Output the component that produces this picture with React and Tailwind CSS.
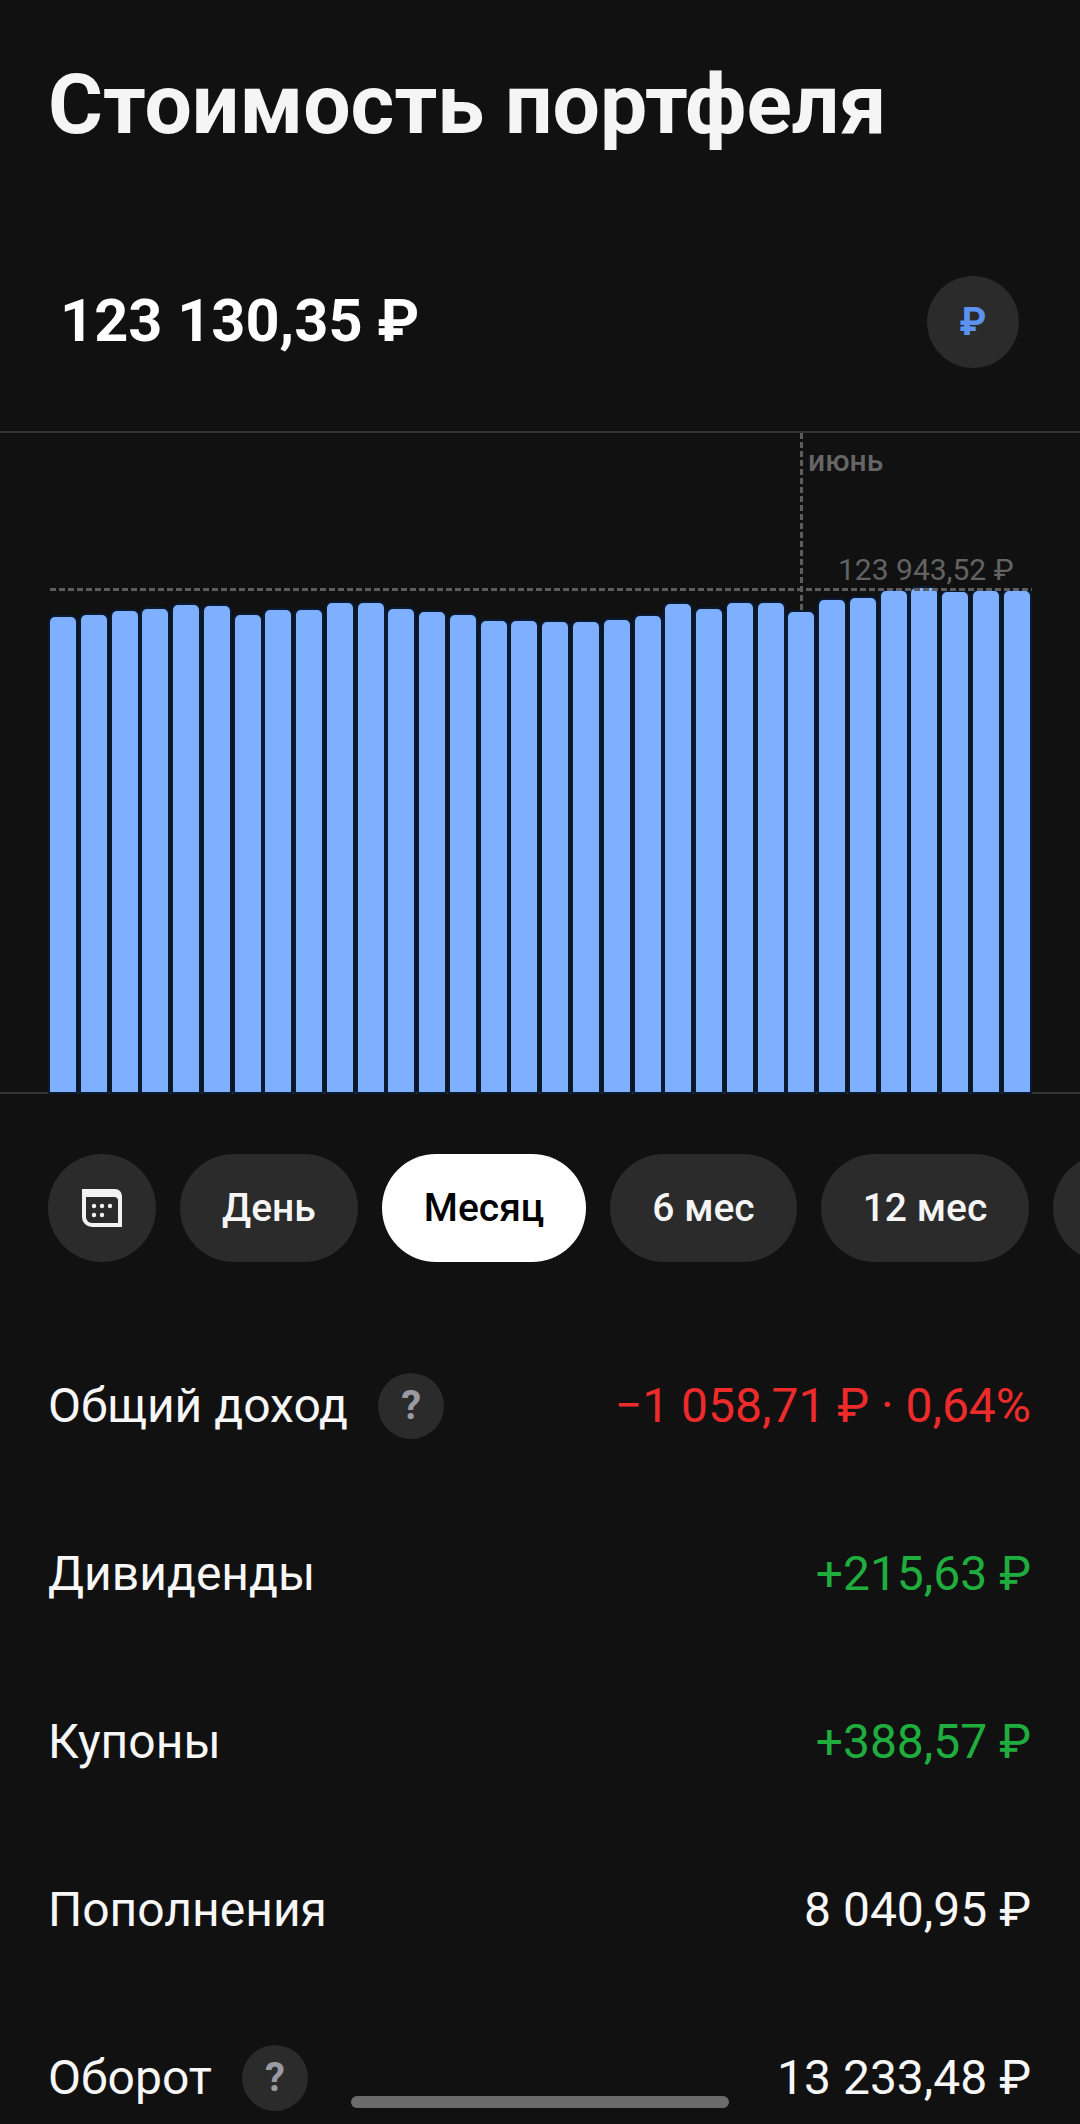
import React from 'react';

const barTops = [
  617, 615, 611, 609, 605, 606, 615, 610, 610, 603, 603, 609, 612, 615, 621, 621,
  622, 622, 620, 616, 604, 609, 603, 603, 612, 600, 598, 591, 588, 592, 591, 591,
];

const CalendarIcon = () => (
  <svg width="40" height="38" viewBox="0 0 40 38" fill="none">
    <path d="M0 0H33a7 7 0 0 1 7 7V38H10A10 10 0 0 1 0 28Z" fill="#f2f2f2" />
    <path d="M4 8H32a4 4 0 0 1 4 4V34H10a6 6 0 0 1-6-6Z" fill="#2b2b2b" />
    <circle cx="12" cy="17" r="2.2" fill="#f2f2f2" />
    <circle cx="20" cy="17" r="2.2" fill="#f2f2f2" />
    <circle cx="28" cy="17" r="2.2" fill="#f2f2f2" />
    <circle cx="12" cy="26" r="2.2" fill="#f2f2f2" />
    <circle cx="20" cy="26" r="2.2" fill="#f2f2f2" />
  </svg>
);

const HelpBadge = () => (
  <span className="flex h-[66px] w-[66px] items-center justify-center rounded-full bg-[#2b2b2b] text-[40px] leading-none font-bold text-[#9a9aa2]">
    ?
  </span>
);

const Pill = ({ children, active }) => (
  <div
    className={
      active
        ? 'flex h-[108px] shrink-0 items-center rounded-full bg-white px-[42px] text-[39px] font-medium text-black'
        : 'flex h-[108px] shrink-0 items-center rounded-full bg-[#2b2b2b] px-[42px] text-[39px] font-medium text-[#f5f5f5]'
    }
  >
    {children}
  </div>
);

const Row = ({ label, help, value, color }) => (
  <div className="flex h-[168px] items-center justify-between pr-[49px] pl-[48px]">
    <div className="flex items-center gap-[30px] text-[48px] text-[#f7f7f7]">
      <span>{label}</span>
      {help && <HelpBadge />}
    </div>
    <span className={`text-[48px] ${color}`}>{value}</span>
  </div>
);

export default function App() {
  return (
    <div className="relative h-[2124px] w-[1080px] overflow-hidden bg-[#111112] font-['Roboto',sans-serif]">
      <h1 className="pt-[58px] pl-[48px] text-[84px] leading-[94px] font-bold text-[#f5f5f5]">
        Стоимость портфеля
      </h1>

      <div className="mt-[124px] flex h-[92px] items-center justify-between pr-[61px] pl-[60px]">
        <span className="text-[59.5px] font-bold text-white">123 130,35 ₽</span>
        <span className="flex h-[92px] w-[92px] items-center justify-center rounded-full bg-[#2b2b2b] text-[38px] font-bold text-[#5b93ee]">
          ₽
        </span>
      </div>

      {/* chart */}
      <div className="relative mt-[63px] h-[663px] border-y-2 border-[#333333]">
        <div className="flex h-full items-end gap-[4.77px] pl-[50px]">
          {barTops.map((top, i) => (
            <div
              key={i}
              className="w-[26px] shrink-0 rounded-t-[5px] bg-[#7eb0ff] shadow-[0_0_0_2px_#0a1a30]"
              style={{ height: 1092 - top }}
            />
          ))}
        </div>

        <div className="absolute top-0 left-[800px] h-[178px] w-[3px] bg-[repeating-linear-gradient(180deg,#5c5c5c_0,#5c5c5c_6px,transparent_6px,transparent_9px)]" />
        <span className="absolute top-[5px] left-[808px] text-[30px] font-medium text-[#666666]">июнь</span>
        <span className="absolute top-[114px] left-[838px] text-[30px] text-[#636363]">123 943,52 ₽</span>
        <div className="absolute top-[155px] left-[50px] h-[3px] w-[982px] bg-[repeating-linear-gradient(90deg,#5c5c5c_0,#5c5c5c_6px,transparent_6px,transparent_9px)]" />
      </div>

      <div className="mt-[60px] flex gap-[24px] overflow-hidden pl-[48px]">
        <div className="flex h-[108px] w-[108px] shrink-0 items-center justify-center rounded-full bg-[#2b2b2b]">
          <CalendarIcon />
        </div>
        <Pill>День</Pill>
        <Pill active>Месяц</Pill>
        <Pill>6 мес</Pill>
        <Pill>12 мес</Pill>
        <div className="h-[108px] w-[120px] shrink-0 rounded-full bg-[#2b2b2b]" />
      </div>

      <div className="mt-[60px]">
        <Row label="Общий доход" help value="−1 058,71 ₽ · 0,64%" color="text-[#ee2b2b]" />
        <Row label="Дивиденды" value="+215,63 ₽" color="text-[#1fae3d]" />
        <Row label="Купоны" value="+388,57 ₽" color="text-[#1fae3d]" />
        <Row label="Пополнения" value="8 040,95 ₽" color="text-[#f7f7f7]" />
        <Row label="Оборот" help value="13 233,48 ₽" color="text-[#f7f7f7]" />
      </div>

      {/* home indicator */}
      <div className="absolute top-[2096px] left-[351px] h-[12px] w-[378px] rounded-full bg-[#6b6b6b]" />
    </div>
  );
}
